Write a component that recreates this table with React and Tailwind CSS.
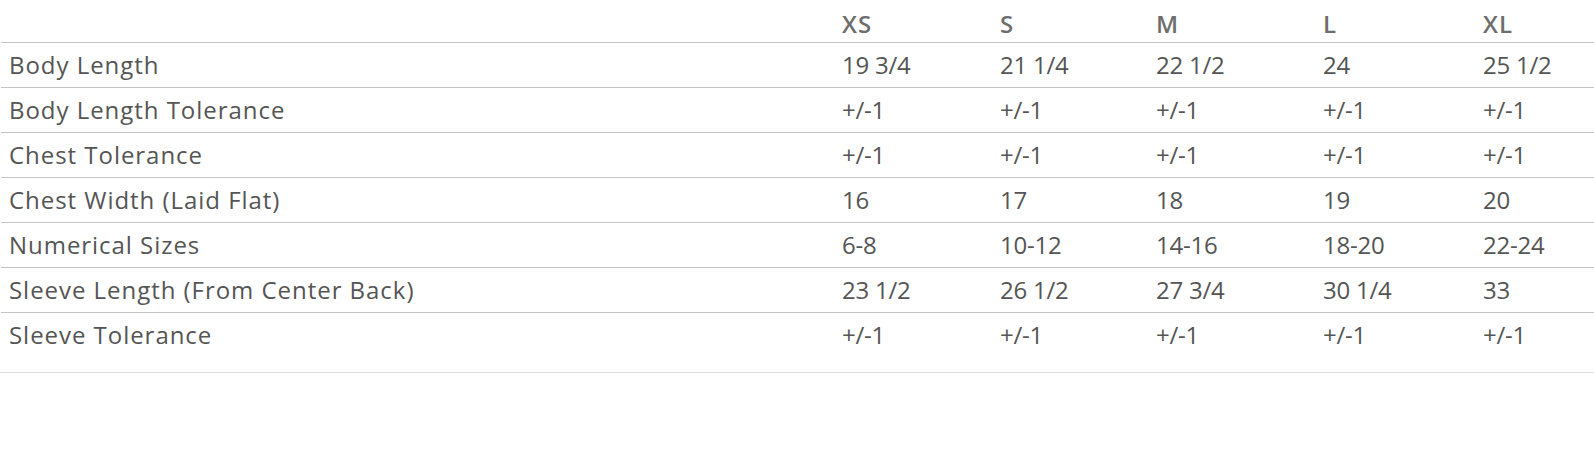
import React from 'react';

const sizes = ['XS', 'S', 'M', 'L', 'XL'];

const rows = [
  { label: 'Body Length', values: ['19 3/4', '21 1/4', '22 1/2', '24', '25 1/2'] },
  { label: 'Body Length Tolerance', values: ['+/-1', '+/-1', '+/-1', '+/-1', '+/-1'] },
  { label: 'Chest Tolerance', values: ['+/-1', '+/-1', '+/-1', '+/-1', '+/-1'] },
  { label: 'Chest Width (Laid Flat)', values: ['16', '17', '18', '19', '20'] },
  { label: 'Numerical Sizes', values: ['6-8', '10-12', '14-16', '18-20', '22-24'] },
  { label: 'Sleeve Length (From Center Back)', values: ['23 1/2', '26 1/2', '27 3/4', '30 1/4', '33'] },
  { label: 'Sleeve Tolerance', values: ['+/-1', '+/-1', '+/-1', '+/-1', '+/-1'] },
];

const cols = 'grid grid-cols-[833px_158px_156px_167px_160px_1fr]';

function App() {
  return (
    <div className="min-h-screen bg-white font-['Open_Sans',sans-serif] text-[24px] text-[#555555]">
      <div className="pb-[15px] border-b border-[#dddddd]">
        <div className="ml-[1px]">
          <div className={`${cols} h-[42px] items-end pb-[2px] font-semibold tracking-[0.04em] text-[#6e6e6e]`}>
            <div />
            {sizes.map((s) => (
              <div key={s} className="px-2 leading-[32px]">{s}</div>
            ))}
          </div>
          {rows.map((row) => (
            <div key={row.label} className={`${cols} h-[45px] items-center border-t border-[#c4c4c4]`}>
              <div className="px-2 leading-[32px] tracking-[0.04em]">{row.label}</div>
              {row.values.map((v, i) => (
                <div key={i} className="px-2 leading-[32px] tracking-[-0.01em]">{v}</div>
              ))}
            </div>
          ))}
        </div>
      </div>
    </div>
  );
}

export default App;
